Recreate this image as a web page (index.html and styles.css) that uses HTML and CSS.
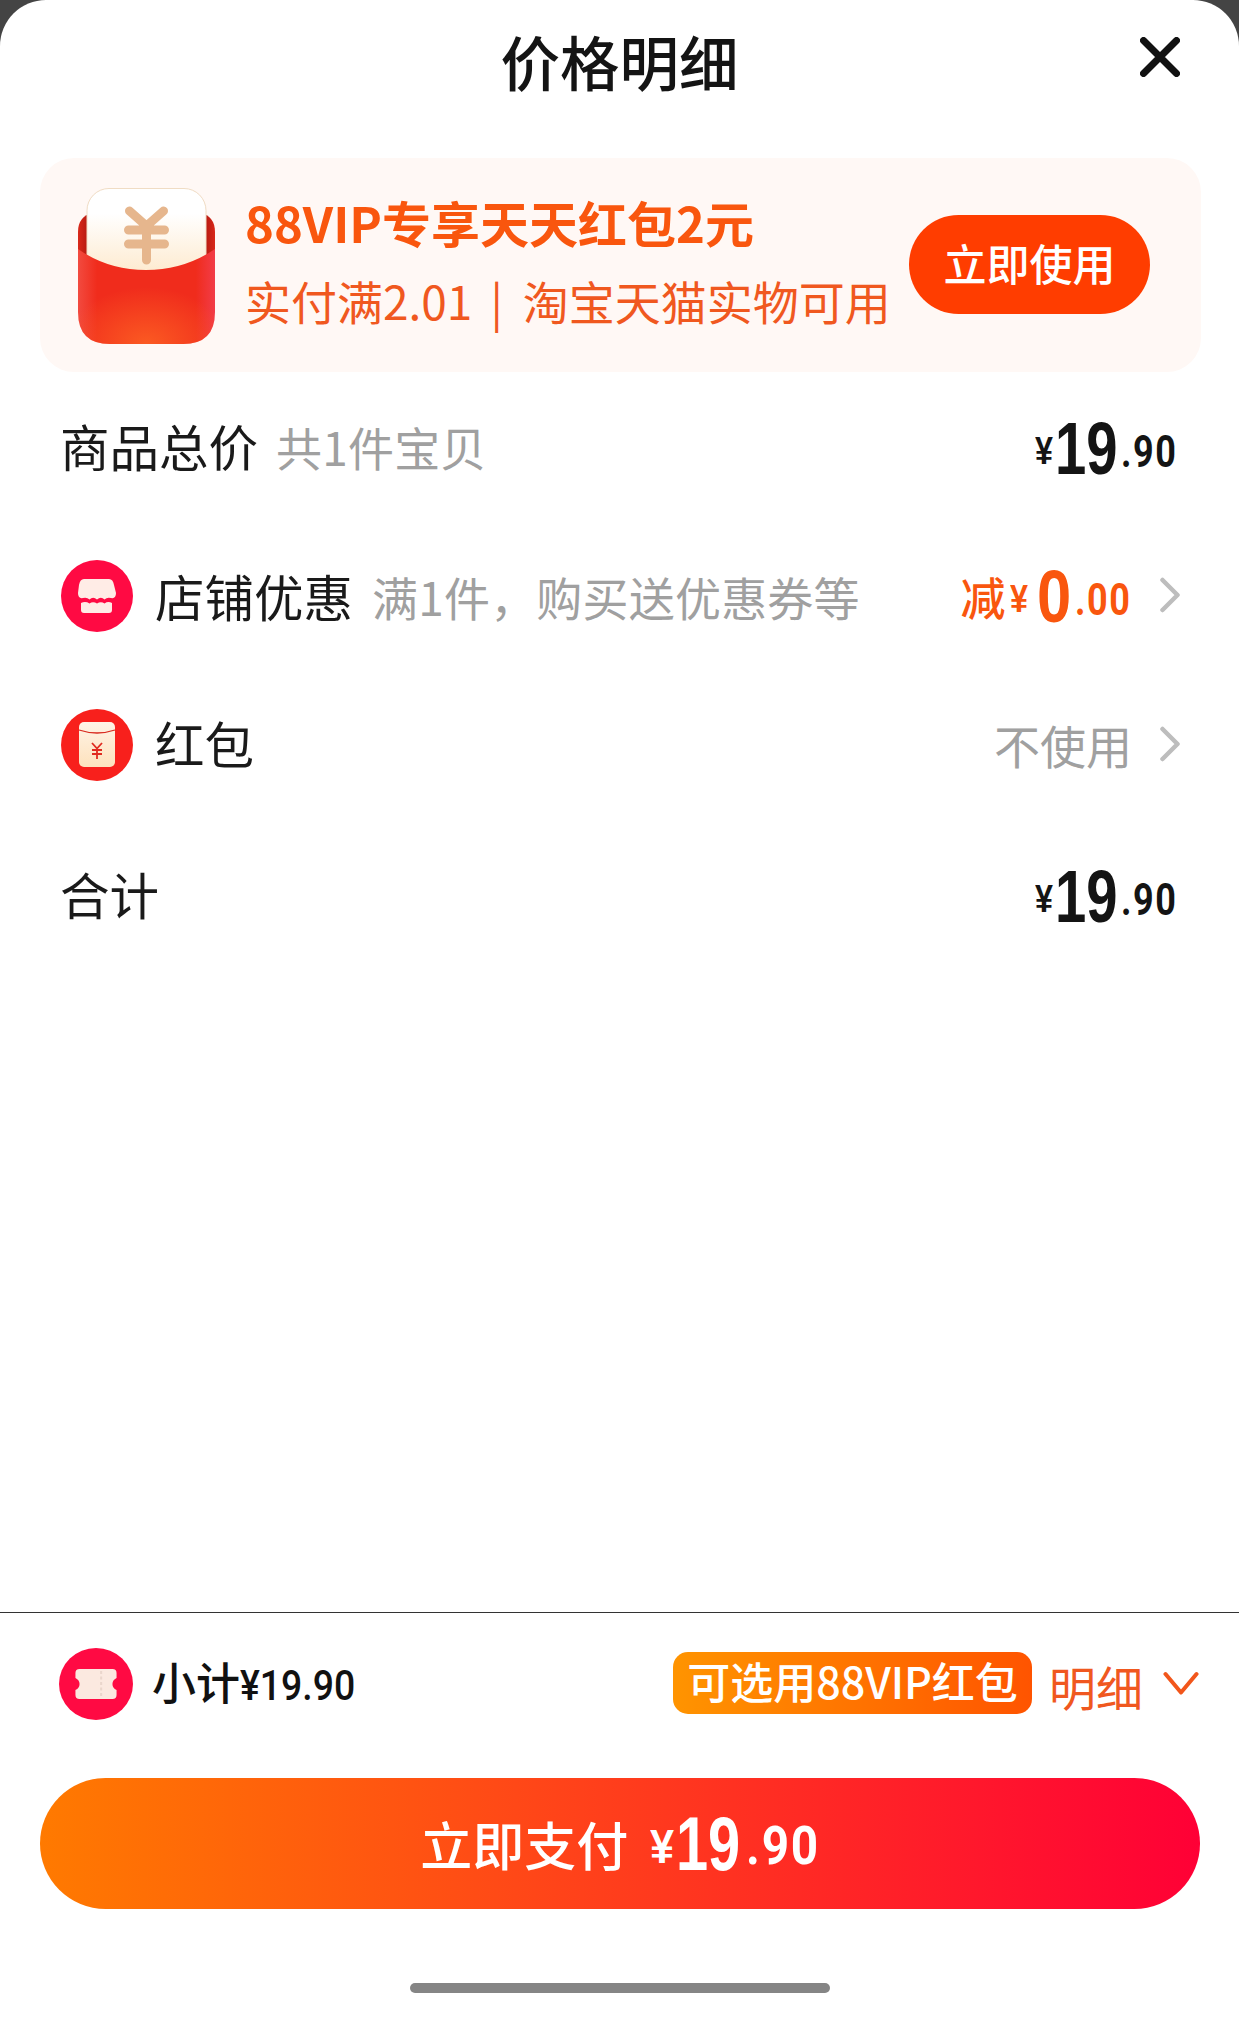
FILE: index.html
```html
<!DOCTYPE html>
<html lang="zh-CN">
<head>
<meta charset="utf-8">
<title>价格明细</title>
<link rel="stylesheet" href="styles.css">
</head>
<body>
<main class="sheet">
  <header class="head">
    <h1 class="head-title">价格明细</h1>
    <svg class="close" viewBox="0 0 40 40"><path d="M3.500 3.500 36.500 36.500M36.500 3.500 3.500 36.500" fill="none" stroke="#111" stroke-width="7" stroke-linecap="round"/></svg>
  </header>

  <section class="promo">
    <svg class="promo-icon" viewBox="0 0 137 156">
      <defs>
        <linearGradient id="card" x1="0" y1="0" x2="0" y2="1"><stop offset="0.25" stop-color="#fff"/><stop offset="1" stop-color="#fde5c3"/></linearGradient>
        <linearGradient id="back" x1="0" y1="0" x2="1" y2="0"><stop offset="0" stop-color="#d9281a"/><stop offset="0.1" stop-color="#a8140e"/><stop offset="0.9" stop-color="#a8140e"/><stop offset="1" stop-color="#d9281a"/></linearGradient>
        <linearGradient id="side" x1="0" y1="0" x2="1" y2="0"><stop offset="0" stop-color="#f24a3f"/><stop offset="0.14" stop-color="#f02c1c"/><stop offset="0.86" stop-color="#f02c1c"/><stop offset="1" stop-color="#f23c48"/></linearGradient>
        <radialGradient id="glow" cx="0.5" cy="1" r="0.6"><stop offset="0" stop-color="#fb5a22"/><stop offset="1" stop-color="#fb5a22" stop-opacity="0"/></radialGradient>
      </defs>
      <path d="M0 44Q0 28 15 25H122Q137 28 137 44V80H0Z" fill="url(#back)"/>
      <rect x="9" y="0.500" width="119" height="100" rx="22" fill="url(#card)" stroke="#f0dcc4"/>
      <path d="M51.500 23 68.500 38 85.500 23M50.500 42H86.500M50.500 56H86.500M68.500 38V72" fill="none" stroke="#e6b68d" stroke-width="9" stroke-linecap="round" stroke-linejoin="round"/>
      <path d="M0 61Q30 82 68 82T137 61V124Q137 156 105 156H32Q0 156 0 124Z" fill="url(#side)"/>
      <path d="M0 61Q30 82 68 82T137 61V124Q137 156 105 156H32Q0 156 0 124Z" fill="url(#glow)"/>
    </svg>
    <div class="promo-text">
      <p class="promo-title">88VIP专享天天红包2元</p>
      <p class="promo-sub">实付满2.01<span class="promo-bar">|</span>淘宝天猫实物可用</p>
    </div>
    <button class="promo-btn">立即使用</button>
  </section>

  <section class="rows">
    <div class="row row-goods">
      <span class="label label-flush">商品总价</span>
      <span class="note note-goods">共1件宝贝</span>
      <span class="price price-end"><span class="yen">¥</span><span class="int">19</span><span class="dec">.90</span></span>
    </div>
    <div class="row row-shop">
      <svg class="badge-icon" viewBox="0 0 72 72">
        <circle cx="36" cy="36" r="36" fill="#ff0a43"/>
        <path d="M23 19H48Q52 19 53 25L55 33Q55 39 50 38Q46 37 43.500 39.500 40 36 36 39.500 32 36 28.500 39.500 26 37 22 38 17 39 17 33L18 25Q19 19 23 19Z" fill="#ffece6"/>
        <path d="M20 43Q24.500 41 28.500 43.500 32 41 36 43.500 40 41 43.500 43.500 47 41 51 43V50Q51 53 48 53H23Q20 53 20 50Z" fill="#ffece6"/>
      </svg>
      <span class="label">店铺优惠</span>
      <span class="note note-shop">满1件，购买送优惠券等</span>
      <span class="price price-orange"><span class="minus">减</span><span class="yen">¥</span><span class="int int-zero">0</span><span class="dec">.00</span></span>
      <svg class="chev" viewBox="0 0 20 36"><path d="M2.500 3 17.500 18 2.500 33" fill="none" stroke="#bdbdbd" stroke-width="4.500" stroke-linecap="round" stroke-linejoin="round"/></svg>
    </div>
    <div class="row row-packet">
      <svg class="badge-icon" viewBox="0 0 72 72">
        <defs><linearGradient id="cream" x1="0" y1="0" x2="0" y2="1"><stop offset="0" stop-color="#fff3e6"/><stop offset="1" stop-color="#fde2bd"/></linearGradient></defs>
        <circle cx="36" cy="36" r="36" fill="#f8201c"/>
        <rect x="18" y="13" width="36" height="45" rx="5" fill="url(#cream)"/>
        <path d="M18 21Q36 27 54 21" fill="none" stroke="#d8281d" stroke-width="1.300"/>
        <path d="M31 34 36 39.500 41 34M31 41H41M31 45H41M36 39.500V50" fill="none" stroke="#e02b20" stroke-width="1.800"/>
      </svg>
      <span class="label">红包</span>
      <span class="value">不使用</span>
      <svg class="chev" viewBox="0 0 20 36"><path d="M2.500 3 17.500 18 2.500 33" fill="none" stroke="#bdbdbd" stroke-width="4.500" stroke-linecap="round" stroke-linejoin="round"/></svg>
    </div>
    <div class="row row-total">
      <span class="label label-flush">合计</span>
      <span class="price price-end"><span class="yen">¥</span><span class="int">19</span><span class="dec">.90</span></span>
    </div>
  </section>

  <footer class="foot">
    <div class="summary">
      <svg class="badge-icon" viewBox="0 0 72 72" preserveAspectRatio="none">
        <circle cx="36" cy="36" r="36" fill="#ff0a43"/>
        <path d="M20 21H52Q56 21 56 25V30Q52 32 52 36T56 42V47Q56 51 52 51H20Q16 51 16 47V42Q20 40 20 36T16 30V25Q16 21 20 21Z" fill="#fbe9e0"/>
        <path d="M41 23V49" stroke="#ead6cc" stroke-width="2" stroke-dasharray="3 2.500"/>
      </svg>
      <span class="subtotal">小计<span class="subtotal-num">¥19.90</span></span>
      <span class="tag">可选用88VIP红包</span>
      <span class="detail">明细</span>
      <svg class="chev-down" viewBox="0 0 36 25"><path d="M2.500 3 18 21.500 33.500 3" fill="none" stroke="#f2561b" stroke-width="4" stroke-linecap="round" stroke-linejoin="round"/></svg>
    </div>
    <button class="pay">
      <span class="pay-label">立即支付</span>
      <span class="price price-pay"><span class="yen">¥</span><span class="int">19</span><span class="dec">.90</span></span>
    </button>
    <div class="home-bar"></div>
  </footer>
</main>
</body>
</html>
```

FILE: styles.css
```css
* { box-sizing: border-box; }
html, body { margin: 0; height: 2017px; overflow: hidden; }
body { background: #444; font-family: "Noto Sans CJK SC", "Noto Sans", sans-serif; color: #111; }
p, h1 { margin: 0; }
button { border: 0; padding: 0; font: inherit; }

.sheet { width: 1239px; height: 2017px; background: #fff; border-radius: 46px 46px 0 0; display: flex; flex-direction: column; }

.head { height: 158px; flex: none; position: relative; display: flex; justify-content: center; }
.head-title { font-size: 59.500px; line-height: 60px; font-weight: 500; margin-top: 30px; color: #141414; }
.close { position: absolute; left: 1140px; top: 37px; width: 40px; height: 40px; }

.promo { flex: none; height: 214px; margin: 0 38px 0 40px; background: #fff8f5; border-radius: 34px; display: flex; align-items: flex-start; padding: 30px 0 0 38px; }
.promo-icon { width: 137px; height: 156px; flex: none; }
.promo-text { margin-left: 31px; width: 664px; flex: none; }
.promo-title { font-size: 49px; line-height: 60px; font-weight: 700; color: #f9560e; margin-top: 4px; margin-left: -1px; white-space: nowrap; }
.promo-sub { font-size: 46px; line-height: 60px; color: #f0581f; margin-top: 18px; margin-left: -1px; white-space: nowrap; }
.promo-bar { margin: 0 20px 0 18px; }
.promo-btn { width: 241px; height: 99px; border-radius: 50px; background: #ff3d00; color: #fff; font-size: 43px; line-height: 90px; padding-bottom: 5px; margin-top: 27px; margin-left: -1px; flex: none; font-weight: 500; }

.rows { flex: 1; display: flex; flex-direction: column; padding: 2px 64px 0 61px; }
.row { height: 148px; flex: none; display: flex; align-items: center; }
.row-packet { margin-top: 1px; }
.row-total { margin-top: 3px; }
.label { font-size: 49.500px; line-height: 60px; color: #1a1a1a; margin-left: 1px; padding-bottom: 4px; }
.label-flush { margin-left: -1px; }
.row-shop .label, .row-shop .note { padding-bottom: 0; }
.badge-icon { width: 72px; height: 72px; flex: none; margin-right: 21px; }
.note { font-size: 46px; line-height: 60px; color: #a0a0a0; padding-bottom: 4px; letter-spacing: 0.2px; }
.note-goods { margin-left: 18px; }
.note-shop { margin-left: 19px; }
.value { margin-left: auto; font-size: 46px; line-height: 60px; color: #a0a0a0; margin-right: 28px; padding-bottom: 2px; }

.price { display: inline-flex; align-items: center; font-family: "Liberation Sans", Arial, sans-serif; font-weight: 700; color: #141414; line-height: 1; }
.price-end { margin-left: auto; }
.yen, .int, .dec { display: inline-block; transform-origin: left center; }
.yen { font-size: 38px; transform: scaleX(0.85); margin-right: -1px; margin-top: 6px; }
.int { font-size: 75px; transform: scaleX(0.75); margin-right: -21px; }
.dec { font-family: Roboto, sans-serif; font-weight: 700; font-size: 45px; letter-spacing: 2px; transform: scaleX(0.8); margin: 6px -17px 0 4px; }
.price-orange { margin-left: auto; margin-right: 31px; color: #f9560e; }
.minus { font-family: "Noto Sans CJK SC", sans-serif; font-size: 45px; font-weight: 500; margin-right: 5px; margin-top: 1px; }
.int-zero { transform: scaleX(0.82); margin: 0 -8px 0 6px; }
.price-orange .dec { margin-left: 5px; }
.chev { width: 20px; height: 36px; flex: none; margin: -2px -5px 0 0; }

.foot { flex: none; height: 405px; border-top: 1px solid #333; display: flex; flex-direction: column; }
.summary { height: 141px; flex: none; margin-bottom: 24px; display: flex; align-items: center; padding: 0 40px 0 59px; }
.summary .badge-icon { width: 74px; height: 72px; margin-right: 19px; }
.subtotal { font-size: 44px; line-height: 60px; font-weight: 500; white-space: nowrap; }
.subtotal-num { display: inline-block; font-family: Roboto, sans-serif; font-size: 42px; transform: scaleX(0.89); transform-origin: left center; margin-right: -14px; }
.tag { margin-left: auto; height: 62px; width: 359px; margin-top: -2px; background: linear-gradient(90deg, #ff9400, #ff5400); border-radius: 15px; color: #fff; font-size: 43px; line-height: 56px; text-align: center; font-weight: 500; white-space: nowrap; }
.detail { font-size: 47px; line-height: 60px; color: #f0581f; margin: 5px 20px 0 17px; }
.chev-down { width: 36px; height: 25px; margin-top: -1px; flex: none; }

.pay { flex: none; height: 131px; margin: 0 39px 0 40px; border-radius: 66px; background: linear-gradient(90deg, #ff7a00, #ff3d1c 50%, #ff0036); color: #fff; display: flex; align-items: center; justify-content: center; }
.pay-label { font-size: 52px; line-height: 60px; font-weight: 500; margin-right: 22px; }
.price-pay { color: #fff; }
.price-pay .yen { font-size: 48px; transform: scaleX(0.9); margin-right: -1px; }
.price-pay .int { font-size: 76px; transform: scaleX(0.76); margin-right: -20px; }
.price-pay .dec { font-size: 53px; font-weight: 700; letter-spacing: 2px; transform: scaleX(0.9); margin: 6px -8px 0 5px; }

.home-bar { flex: none; width: 420px; height: 10px; border-radius: 5px; background: #858585; margin: 74px 0 0 410px; }
```
